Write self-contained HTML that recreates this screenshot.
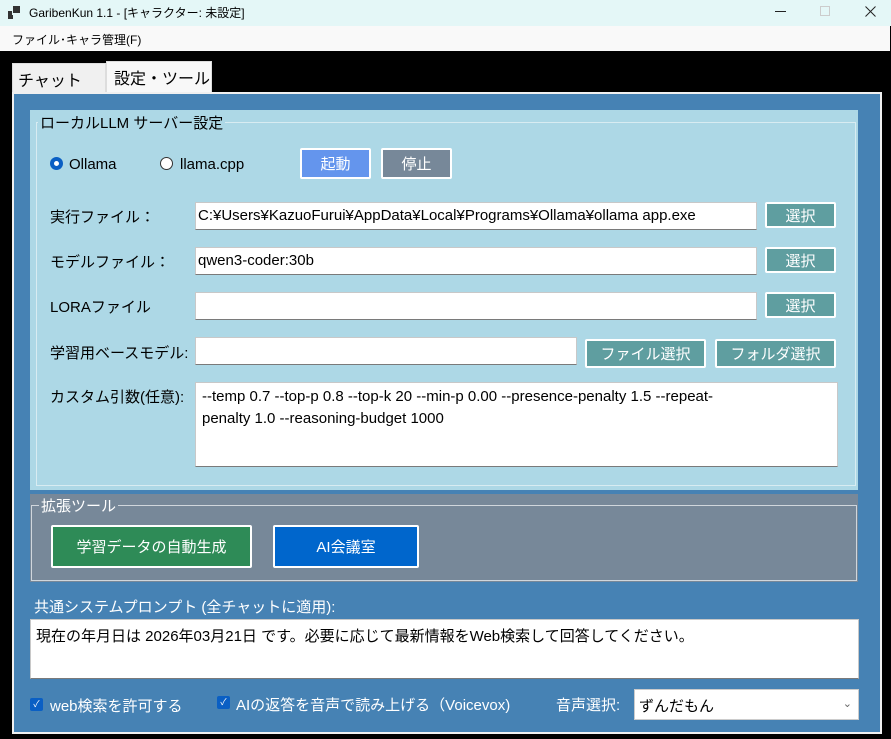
<!DOCTYPE html><html><head><meta charset="utf-8"><style>
*{box-sizing:border-box;margin:0;padding:0}
body{width:891px;height:739px;background:#000;position:relative;overflow:hidden;font-family:"Liberation Sans","Noto Sans CJK JP",sans-serif;color:#000}
.a{position:absolute}
.t{font-size:15px;white-space:nowrap}
.in{position:absolute;background:#fff;border:1px solid #c8c8c8;border-bottom:1px solid #7a7a7a;font-size:15px;padding:4px 2px}
.bt{position:absolute;border:2px solid #fff;color:#fff;font-size:15px;display:flex;align-items:center;justify-content:center;border-radius:2px}
.sel{background:#5f9ea0}
</style></head><body>
<div class="a" style="left:0;top:0;width:891px;height:26px;background:#e4f7f7"></div>
<div class="a" style="left:8px;top:11px;width:4px;height:4px;background:#333"></div>
<div class="a" style="left:13px;top:6px;width:7px;height:7px;background:#333"></div>
<div class="a" style="left:8px;top:15px;width:5px;height:4px;background:#333"></div>
<div class="a t" style="left:29px;top:4px;font-size:12px">GaribenKun 1.1 - [キャラクター: 未設定]</div>
<div class="a" style="left:775px;top:11px;width:11px;height:1px;background:#222"></div>
<div class="a" style="left:820px;top:6px;width:10px;height:10px;border:1px solid #ccc"></div>
<svg class="a" style="left:865px;top:6px" width="11" height="11"><path d="M0.5 0.5L10.5 10.5M10.5 0.5L0.5 10.5" stroke="#222" stroke-width="1"/></svg>
<div class="a" style="left:0;top:26px;width:890px;height:25px;background:#f9f9f9"></div>
<div class="a t" style="left:12px;top:31px;font-size:12px">ファイル･キャラ管理(F)</div>
<div class="a" style="left:12px;top:63px;width:94px;height:30px;background:#f0f0f0;border:1px solid #ddd"></div>
<div class="a t" style="left:18px;top:67px;font-size:16px">チャット</div>
<div class="a" style="left:106px;top:61px;width:106px;height:33px;background:#f8f8f8;border:1px solid #ddd;border-bottom:none"></div>
<div class="a t" style="left:114px;top:65px;font-size:16px">設定・ツール</div>
<div class="a" style="left:12px;top:92px;width:870px;height:642px;background:#f0f0f0"></div>
<div class="a" style="left:14px;top:94px;width:866px;height:638px;background:#4682b4"></div>
<div class="a" style="left:30px;top:110px;width:828px;height:380px;background:#add8e6"></div>
<div class="a" style="left:36px;top:122px;width:820px;height:364px;border:1px solid #d8ecf2"></div>
<div class="a t" style="left:38px;top:112px;background:#add8e6;padding:0 2px">ローカルLLM サーバー設定</div>
<div class="a" style="left:50px;top:157px;width:13px;height:13px;border-radius:50%;border:4px solid #0a5fc4;background:#fff"></div>
<div class="a t" style="left:69px;top:156px">Ollama</div>
<div class="a" style="left:160px;top:157px;width:13px;height:13px;border-radius:50%;border:1px solid #333;background:#fff"></div>
<div class="a t" style="left:180px;top:156px">llama.cpp</div>
<div class="bt" style="left:300px;top:148px;width:71px;height:31px;background:#6495ed">起動</div>
<div class="bt" style="left:381px;top:148px;width:71px;height:31px;background:#778899">停止</div>
<div class="a t" style="left:50px;top:206px">実行ファイル：</div>
<div class="in" style="left:195px;top:202px;width:562px;height:28px">C:¥Users¥KazuoFurui¥AppData¥Local¥Programs¥Ollama¥ollama app.exe</div>
<div class="bt sel" style="left:765px;top:202px;width:71px;height:26px">選択</div>
<div class="a t" style="left:50px;top:251px">モデルファイル：</div>
<div class="in" style="left:195px;top:247px;width:562px;height:28px">qwen3-coder:30b</div>
<div class="bt sel" style="left:765px;top:247px;width:71px;height:26px">選択</div>
<div class="a t" style="left:50px;top:296px">LORAファイル</div>
<div class="in" style="left:195px;top:292px;width:562px;height:28px"></div>
<div class="bt sel" style="left:765px;top:292px;width:71px;height:26px">選択</div>
<div class="a t" style="left:50px;top:342px">学習用ベースモデル:</div>
<div class="in" style="left:195px;top:337px;width:382px;height:28px"></div>
<div class="bt sel" style="left:585px;top:339px;width:121px;height:29px">ファイル選択</div>
<div class="bt sel" style="left:715px;top:339px;width:121px;height:29px">フォルダ選択</div>
<div class="a t" style="left:50px;top:386px">カスタム引数(任意):</div>
<div class="in" style="left:195px;top:382px;width:643px;height:85px;padding:3px 6px;line-height:22px;white-space:nowrap">--temp 0.7 --top-p 0.8 --top-k 20 --min-p 0.00 --presence-penalty 1.5 --repeat-<br>penalty 1.0 --reasoning-budget 1000</div>
<div class="a" style="left:30px;top:494px;width:828px;height:88px;background:#778899"></div>
<div class="a" style="left:31px;top:505px;width:826px;height:76px;border:1px solid #d0d6dc"></div>
<div class="a t" style="left:39px;top:495px;background:#778899;color:#fff;padding:0 2px">拡張ツール</div>
<div class="bt" style="left:51px;top:525px;width:201px;height:43px;background:#2e8b57">学習データの自動生成</div>
<div class="bt" style="left:273px;top:525px;width:146px;height:43px;background:#0066cc">AI会議室</div>
<div class="a t" style="left:34px;top:596px;color:#fff">共通システムプロンプト (全チャットに適用):</div>
<div class="in" style="left:30px;top:619px;width:829px;height:60px;padding:5px 5px">現在の年月日は 2026年03月21日 です。必要に応じて最新情報をWeb検索して回答してください。</div>
<div class="a" style="left:30px;top:698px;width:13px;height:13px;background:#0a5fc4;border-radius:2px;color:#fff;font-size:9px;text-align:center;line-height:13px">✓</div>
<div class="a t" style="left:50px;top:695px;color:#fff">web検索を許可する</div>
<div class="a" style="left:217px;top:696px;width:13px;height:13px;background:#0a5fc4;border-radius:2px;color:#fff;font-size:9px;text-align:center;line-height:13px">✓</div>
<div class="a t" style="left:236px;top:694px;color:#fff">AIの返答を音声で読み上げる（Voicevox)</div>
<div class="a t" style="left:556px;top:694px;color:#fff">音声選択:</div>
<div class="in" style="left:634px;top:689px;width:225px;height:31px;padding:5px 4px;border:1px solid #ccc">ずんだもん<span style="position:absolute;right:6px;top:7px;font-size:11px;color:#666">⌄</span></div>
</body></html>
